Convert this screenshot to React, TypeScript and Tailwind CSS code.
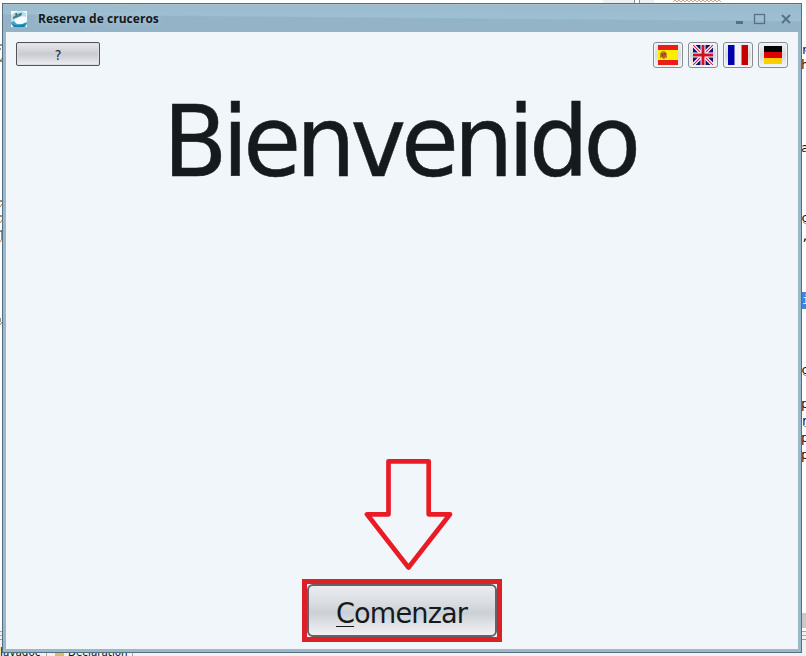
import type { ReactNode } from "react";

const uiFont = "font-['Open_Sans','Noto_Sans',sans-serif]";
const displayFont = "font-['DejaVu_Sans',sans-serif]";

function CruiseIcon() {
  return (
    <svg width="16" height="16" viewBox="0 0 16 16" className="block">
      <rect width="16" height="16" fill="#f3fbfd" />
      <path d="M0 4 5 1l5-1 5 2v4l-4-1-3 3-4 1-4 2z" fill="#b9deea" />
      <path d="M2 6 6 3l3 1-1 2-6 2z" fill="#527d87" />
      <path d="m7 3 4-1-1 3zM3 3l3-1v2z" fill="#315c6c" />
      <path d="M0 11l3-1 3 3h5l5-2v2l-2 3H3l-3-3z" fill="#42a5cf" />
      <path d="M4 8l4-2 5 1 1 4-2 1-5 1-3-2z" fill="#f7feff" />
      <path d="M1 13c4 2 9 2 14-1l-2 4H3z" fill="#167fac" />
    </svg>
  );
}

function FlagButton({ label, children }: { label: string; children: ReactNode }) {
  return (
    <button
      aria-label={label}
      className="flex h-[26px] w-[30px] items-start justify-center rounded-[3px] border border-[#888d94] bg-linear-to-b from-[#f0f2f4] via-[#d6d9dd] to-[#f4f5f7] pt-[2px] shadow-[inset_0_0_0_1px_#f3f5f7]"
    >
      <svg width="20" height="20" viewBox="0 0 20 20">{children}</svg>
    </button>
  );
}

function Flags() {
  return (
    <div className="flex gap-[5px]">
      <FlagButton label="Español">
        <rect width="20" height="20" fill="#ed1c16" />
        <rect y="5" width="20" height="10" fill="#ffed00" />
        <path d="M3 7h5v5l-2 2-3-2z" fill="#b65c22" />
        <path d="M4 6h3v2H4zM2 8h1v5H2zM8 8h1v5H8z" fill="#bd8521" />
        <path d="M4 9h1v2H4zM6 8h1v2H6z" fill="#9b3e24" />
      </FlagButton>
      <FlagButton label="English">
        <rect width="20" height="20" fill="#10107b" />
        <path d="m0 0 20 20M20 0 0 20" stroke="#fff" strokeWidth="3.5" />
        <path d="m0 0 20 20M20 0 0 20" stroke="#d5203b" strokeWidth="1.2" />
        <path d="M10 0v20M0 10h20" stroke="#fff" strokeWidth="5" />
        <path d="M10 0v20M0 10h20" stroke="#ce102a" strokeWidth="3" />
      </FlagButton>
      <FlagButton label="Français">
        <rect width="20" height="20" fill="#f4f4f8" />
        <rect width="6.5" height="20" fill="#0000ac" />
        <rect x="13.5" width="6.5" height="20" fill="#c40000" />
      </FlagButton>
      <FlagButton label="Deutsch">
        <rect x="1" y="1" width="18" height="18" fill="#ffce00" />
        <rect x="1" y="1" width="18" height="12" fill="#df0000" />
        <rect x="1" y="1" width="18" height="6" fill="#000" />
      </FlagButton>
    </div>
  );
}

function EditorBackdrop() {
  const fragments = [
    { y: 42, text: "r" }, { y: 57, text: "h" }, { y: 140, text: "a" },
    { y: 210, text: "c" }, { y: 228, text: "," }, { y: 362, text: "c" },
    { y: 396, text: "p" }, { y: 413, text: "r" }, { y: 430, text: "p" }, { y: 447, text: "p" },
  ];
  return (
    <div className="absolute inset-0 overflow-hidden bg-white font-['DejaVu_Sans_Mono',monospace] text-[13px] leading-[15px] text-[#151515]">
      <div className="absolute top-0 left-[603px] h-[3px] w-[31px] bg-[#eff0f2]" />
      <div className="absolute top-0 left-[634px] h-[3px] w-[6px] border-x border-[#85919b]" />
      <div className="absolute top-0 left-[640px] h-[3px] w-[14px] bg-[#eff0f2]" />
      <svg className="absolute top-0 left-[673px]" width="50" height="3">
        <path d="m0 2 2-2 2 2 2-2 2 2 2-2 2 2 2-2 2 2 2-2 2 2 2-2 2 2 2-2 2 2 2-2 2 2 2-2 2 2 2-2 2 2 2-2 2 2 2-2 2 2" fill="none" stroke="#d2a48a" />
      </svg>
      {fragments.map(({ y, text }) => (
        <span key={y} className="absolute left-[801px]" style={{ top: y }}>{text}</span>
      ))}
      <div className="absolute top-[292px] left-[802px] h-[17px] w-1 bg-[#3689dc] text-white">i</div>
      <svg className="absolute inset-0" width="806" height="656">
        <path d="m0 61 2-3M0 207l2-3M0 223l2-3M0 242l2-3M0 325l2-3M803 54l3-4M803 222l3 2M803 374l3 2M803 425l3 2" stroke="#be7847" fill="none" />
        <path d="M0 45h2M0 49h1M0 61h2M0 201h2M0 216h2M0 231h2v8M0 318v4" stroke="#252525" fill="none" />
      </svg>
      <div className="absolute top-[631px] h-[25px] w-full border-t border-[#9da7b0] bg-[#f1f1f1]" />
      <div className="absolute top-[635px] h-px w-full bg-[#a5a9ad]" />
      <div className="absolute top-[639px] h-px w-full bg-[#909ba4]" />
      <div className="absolute top-[613px] left-[802px] h-[15px] w-1 bg-[#c9c9c9]" />
      <div className="absolute top-[646px] left-0 flex h-3 items-center font-['DejaVu_Sans_Condensed','DejaVu_Sans',sans-serif] text-[11.5px] leading-3 text-[#111]">
        <span className="w-[46px]">Javadoc</span>
        <span className="mr-2 h-3 border-r border-[#a8a8a8]" />
        <span className="mr-1 size-[9px] bg-[#d8bd67]" />
        <span className="w-[64px]">Declaration</span>
        <span className="h-3 border-r border-[#a8a8a8]" />
      </div>
    </div>
  );
}

export default function App() {
  return (
    <main className="relative h-[656px] w-[806px] overflow-hidden">
      <EditorBackdrop />
      <section className="absolute top-[3px] left-[2px] flex h-[650px] w-[800px] flex-col border border-[#536f82] bg-[#9ab8c9] px-[3px] pb-[3px]">
        <header className="-mx-[3px] flex h-7 shrink-0 items-center border-t border-[#a9c3d2] bg-[linear-gradient(180.5deg,#99bbce_0%,#9dbfd1_46%,#93b3c7_50%,#95b3c6_100%)] pr-[10px] pl-2">
          <CruiseIcon />
          <h1 className={`${uiFont} ml-[11px] text-[12px] leading-4 font-bold tracking-[0.04px] text-[#11191e] [text-shadow:0_0_4px_#bad0dc]`}>
            Reserva de cruceros
          </h1>
          <svg className="ml-auto" width="56" height="16" viewBox="0 0 56 16">
            <path d="M1 11.5h7" stroke="#577184" strokeWidth="3" />
            <rect x="19.5" y="3.5" width="10" height="9" fill="none" stroke="#577184" strokeWidth="1.3" />
            <path d="m47 4 8 8M55 4l-8 8" stroke="#577184" strokeWidth="2" />
          </svg>
        </header>
        <div className="flex min-h-0 flex-1 flex-col items-center bg-[#f0f6fa]">
          <div className="flex h-9 w-full items-start justify-between pt-[10px] pr-[10px] pl-[10px]">
            <button className="flex h-6 w-[84px] items-center justify-center rounded-[2px] border-[1.5px] border-[#51545b] bg-linear-to-b from-[#e9e9ef] via-[#c9cbd1] to-[#ededf2] font-['DejaVu_Sans_Condensed','DejaVu_Sans',sans-serif] text-[14px] text-[#202326] shadow-[inset_0_0_0_1px_#dedfe4]">
              <span className="pt-[2px]">?</span>
            </button>
            <Flags />
          </div>
          <h2 className={`${displayFont} mt-[14px] ml-[157px] h-[120px] origin-left scale-x-[.96] self-start text-[98px] leading-[121px] font-normal tracking-[-5.4px] whitespace-nowrap text-[#151a1d] [-webkit-text-stroke:0.5px_#151a1d]`}>
            Bienvenido
          </h2>
          <svg className="mt-[254px] ml-[13px] shrink-0" width="90" height="116" viewBox="364 456 90 116">
            <path d="M388.5 461.3H428.7V514.3H450L408.5 567.5 367 514.3H388.5Z" fill="none" stroke="#e91c26" strokeWidth="4.7" strokeLinejoin="round" />
          </svg>
          <div className="mt-[7px] h-[63px] w-[200px] shrink-0 border-[5px] border-[#dc2027] bg-[#edf2f6]">
            <button className={`${displayFont} h-full w-full rounded-[6px] border-2 border-[#656167] bg-[linear-gradient(#e9edf1,#d9dde2_35%,#cbd0d5_55%,#e6e7eb_85%,#f1f0f4)] text-[28px] leading-[48px] text-[#151a1d]`}>
              <span className="inline-block scale-x-[.97] pt-[4px] leading-[47px] tracking-[-0.9px]">
                <span className="underline decoration-1 underline-offset-[3px]">C</span>omenzar
              </span>
            </button>
          </div>
        </div>
      </section>
    </main>
  );
}
